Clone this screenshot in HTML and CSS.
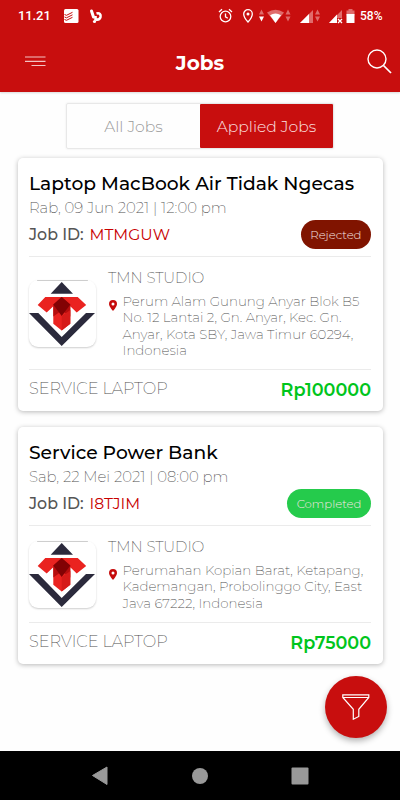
FILE: index.html
```html
<!DOCTYPE html>
<html lang="id">
<head>
    <meta charset="UTF-8">
    <meta name="viewport" content="width=device-width, initial-scale=1.0">
    <title>Jobs</title>
    <link rel="stylesheet" href="styles.css">
</head>
<body>

<!-- shared drawings, reused by both cards -->
<svg class="symbols" width="0" height="0">
    <symbol id="studio-logo" viewBox="0 0 67 67">
        <path d="M8 .3h51" stroke="#999" stroke-width=".6"/>
        <path d="M32.700 2L44 13.700H21.700z" fill="#2b2a3c"/>
        <path d="M0 33h9.300l23.400 24L57 33h9L32.700 66z" fill="#2b2a3c"/>
        <path d="M16.300 17h32.400l8.500 8-9.500 7.500-6.400-6.200v17.400l-8.600 6.800-8.400-6.800V26.300l-6.600 6.200-9-7.500z" fill="#ea2320"/>
        <path d="M24.300 24.500l8.400-7.500 8.600 7.500v12l-8.600-6-8.400 6z" fill="#b50d0d"/>
        <path d="M32.700 17l8.600 7.500-8.600 11.500-8.400-11.500z" fill="#820204"/>
        <path d="M32.700 36l8.600-6v13.700l-8.600 6.800z" fill="#d61b19"/>
    </symbol>
    <symbol id="pin" viewBox="0 0 8 11">
        <path fill-rule="evenodd" d="M4 0a4 4 0 0 0-4 4c0 2.600 4 7 4 7s4-4.400 4-7a4 4 0 0 0-4-4zm0 2.500a1.500 1.500 0 1 1 0 3 1.500 1.500 0 0 1 0-3z" fill="#c60b0b"/>
    </symbol>
</svg>

<header class="header">
    <div class="status-bar">
        <span class="clock">11.21</span>
        <svg class="notif" width="40" height="16" viewBox="0 0 40 16">
            <rect x="0" y="1" width="14.500" height="14" rx="1.500" fill="#fff"/>
            <path d="M.5 6.500l2 .8 6-3M.5 9l2 .8 6-3M.5 11.500l2 .8 6-3" fill="none" stroke="#c80e0e"/>
            <path d="M27.500 3l2 6" stroke="#fff" stroke-width="3" stroke-linecap="round"/>
            <path d="M32.500 5.500c3-1 4.500 1 4 3.500-.5 2.200-2.500 3-5 2.500V8" fill="none" stroke="#fff" stroke-width="2.600"/>
            <circle cx="30.500" cy="13.500" r="1.600" fill="#fff"/>
        </svg>
        <svg class="signals" width="138" height="16" viewBox="0 0 138 16">
            <g fill="none" stroke="#fff" stroke-width="1.300">
                <circle cx="7.500" cy="8.500" r="5.300"/>
                <path d="M7.500 5.500v3.300l2.300 1.400M1 4l3-2.700M14 4l-3-2.700"/>
                <path d="M30 1.700a4.300 4.300 0 0 0-4.300 4.300c0 3.300 4.300 8 4.300 8s4.300-4.700 4.300-8A4.300 4.300 0 0 0 30 1.700z"/>
            </g>
            <circle cx="30" cy="6" r="1.500" fill="#fff"/>
            <path d="M41 6.500l2.500-5 2.500 5zM67.500 6.500l2.500-5 2.500 5zM97 6.500l2.500-5 2.500 5zM67.500 8.500h5l-2.500 5zM97 8.500h5l-2.500 5z" fill="#e06b6b"/>
            <path d="M41 8.500h5l-2.500 5z" fill="#fff"/>
            <path d="M49 4.500q8.500-5.500 17 0L57.500 15z" fill="#e06b6b"/>
            <path d="M52 7.300q5.500-3.600 11 0L57.500 15z" fill="#fff"/>
            <path d="M82 15L95 2v13z" fill="#e06b6b"/>
            <path d="M82 15L91 6v9z" fill="#fff"/>
            <path d="M111 15l13-13v8h-5v5z" fill="#e06b6b"/>
            <path d="M111 15l8-8.500V15z" fill="#fff"/>
            <path d="M119.500 10.500h5v5h-5z" fill="#c80e0e"/>
            <path d="M120 11l4 4M124 11l-4 4" stroke="#fff" stroke-width="1.300"/>
            <path d="M128.500 2.500h2V1h4v1.500h2v5h-8z" fill="#e06b6b"/>
            <path d="M128.500 6h8v9h-8z" fill="#fff"/>
        </svg>
        <span class="battery">58%</span>
    </div>
    <div class="app-bar">
        <svg class="menu-icon" width="21" height="11" viewBox="0 0 21 11">
            <path d="M0 1h20.500M0 5.300h20.500M6.500 9.500h14" stroke="#f3c3c3" stroke-width="1.200"/>
        </svg>
        <h1 class="page-title">Jobs</h1>
        <svg class="search-icon" width="25" height="25" viewBox="0 0 25 25">
            <circle cx="10" cy="10" r="9" fill="none" stroke="#fff" stroke-width="1.400"/>
            <path d="M16.500 16.500L24 24" stroke="#fff" stroke-width="1.700"/>
        </svg>
    </div>
</header>

<main class="content">
    <div class="tabs">
        <div class="tab"><span>All Jobs</span></div>
        <div class="tab active"><span>Applied Jobs</span></div>
    </div>

    <article class="card">
        <h2 class="card-title">Laptop MacBook Air Tidak Ngecas</h2>
        <div class="card-date">Rab, 09 Jun 2021 | 12:00 pm</div>
        <div class="job-row">
            <span class="job-label">Job ID:</span>
            <span class="job-code">MTMGUW</span>
            <span class="badge rejected">Rejected</span>
        </div>
        <div class="card-body">
            <svg class="logo"><use href="#studio-logo"/></svg>
            <div class="studio">
                <div class="studio-name">TMN STUDIO</div>
                <div class="address">
                    <svg class="pin"><use href="#pin"/></svg>
                    <p>Perum Alam Gunung Anyar Blok B5<br>No. 12 Lantai 2, Gn. Anyar, Kec. Gn.<br>Anyar, Kota SBY, Jawa Timur 60294,<br>Indonesia</p>
                </div>
            </div>
        </div>
        <div class="card-footer">
            <span class="service">SERVICE LAPTOP</span>
            <span class="price">Rp100000</span>
        </div>
    </article>

    <article class="card">
        <h2 class="card-title">Service Power Bank</h2>
        <div class="card-date">Sab, 22 Mei 2021 | 08:00 pm</div>
        <div class="job-row">
            <span class="job-label">Job ID:</span>
            <span class="job-code">I8TJIM</span>
            <span class="badge completed">Completed</span>
        </div>
        <div class="card-body">
            <svg class="logo"><use href="#studio-logo"/></svg>
            <div class="studio">
                <div class="studio-name">TMN STUDIO</div>
                <div class="address">
                    <svg class="pin"><use href="#pin"/></svg>
                    <p>Perumahan Kopian Barat, Ketapang,<br>Kademangan, Probolinggo City, East<br>Java 67222, Indonesia</p>
                </div>
            </div>
        </div>
        <div class="card-footer">
            <span class="service">SERVICE LAPTOP</span>
            <span class="price">Rp75000</span>
        </div>
    </article>
</main>

<div class="filter-btn">
    <svg width="28" height="26" viewBox="0 0 28 26">
        <path d="M.8.800h26v2.700l-10 11.800v7.200l-5.500 2.700v-9.900L.8 3.500zM1 3.500h25.500" fill="none" stroke="#fff" stroke-width="1.200"/>
    </svg>
</div>

<nav class="nav-bar">
    <svg width="18" height="20" viewBox="0 0 18 20"><path d="M1.500 9.500L16 1v17.500z" fill="#999" stroke="#999" stroke-linejoin="round"/></svg>
    <svg width="18" height="18" viewBox="0 0 18 18"><circle cx="9" cy="9" r="8" fill="#999"/></svg>
    <svg width="18" height="18" viewBox="0 0 18 18"><rect x=".5" y=".5" width="17" height="17" rx="1" fill="#999"/></svg>
</nav>

</body>
</html>
```
FILE: styles.css
```css
* {
    box-sizing: border-box;
}

body {
    margin: 0;
    height: 800px;
    display: flex;
    flex-direction: column;
    overflow: hidden;
    position: relative;
    background: #fefefe;
    font-family: Montserrat, Inter, sans-serif;
    font-weight: 200;
    color: #505050;
    white-space: nowrap;
}

.symbols {
    position: absolute;
}

/* header */
.header {
    height: 92px;
    flex-shrink: 0;
    background: #c80e0e;
    color: #fff;
    box-shadow: 0 1px 2px rgba(0, 0, 0, 0.15);
}

.status-bar {
    height: 31px;
    display: flex;
    align-items: center;
    padding: 0 17px 0 18px;
    font-family: Roboto, sans-serif;
    font-weight: 500;
}

.clock {
    width: 46px;
    font-size: 13px;
    letter-spacing: -0.1px;
}

.signals {
    margin-left: auto;
    margin-right: 4px;
}

.battery {
    width: 23px;
    font-size: 12px;
}

.app-bar {
    height: 61px;
    display: grid;
    grid-template-columns: 1fr auto 1fr;
    align-items: center;
    padding: 0 8px 0 25px;
}

.page-title {
    margin: 2px 0 0 -17px;
    font-size: 20px;
    font-weight: 700;
}

.search-icon {
    justify-self: end;
}

/* tabs */
.tabs {
    display: flex;
    width: 268px;
    height: 46px;
    margin: 11px auto 9px;
    border: 1px solid #e8e8e8;
    border-radius: 2px;
    box-shadow: 0 0 2px rgba(0, 0, 0, 0.1);
}

.tab {
    flex: 1;
    display: flex;
    align-items: center;
    justify-content: center;
    font-size: 15.6px;
    font-weight: 300;
    color: #999;
}

.tab.active {
    background: #c80e0e;
    color: #fbe4e4;
    border-radius: 1px;
}

/* job cards */
.card {
    width: 365px;
    margin: 0 auto 16px;
    padding: 13px 11.5px 0;
    background: #fff;
    border-radius: 5px;
    box-shadow: 0 1px 5px rgba(0, 0, 0, 0.28);
}

.card-title {
    margin: 0;
    font-size: 18.7px;
    font-weight: 500;
    line-height: 25px;
    color: #000;
}

.card-date {
    font-size: 14.9px;
    line-height: 24px;
}

.job-row {
    display: flex;
    align-items: center;
    height: 29px;
}

.job-label {
    width: 60.5px;
    font-size: 15.8px;
    font-weight: 500;
    color: #555;
}

.job-code {
    font-size: 15.6px;
    font-weight: 400;
    color: #c80000;
}

.badge {
    margin-left: auto;
    height: 29px;
    padding: 0 9.5px;
    border-radius: 15px;
    font-size: 11.7px;
    font-weight: 300;
    line-height: 30px;
    color: #f6e6e3;
}

.rejected {
    background: #801400;
}

.completed {
    background: #25cb4c;
}

.card-body {
    display: flex;
    align-items: center;
    margin-top: 7px;
    padding: 11px 0 10px;
    border-top: 1px solid #ebebeb;
    border-bottom: 1px solid #ebebeb;
}

.logo {
    width: 67px;
    height: 67px;
    margin-right: 12px;
    border-radius: 9px;
    box-shadow: 0 1px 2px rgba(0, 0, 0, 0.2);
}

.studio-name {
    font-size: 14.9px;
    line-height: 20px;
    margin-bottom: 5px;
}

.address {
    display: flex;
    margin-bottom: 1px;
    font-size: 13.4px;
    line-height: 16.3px;
}

.address p {
    margin: 0;
}

.pin {
    width: 8px;
    height: 11px;
    margin: 7px 5.500px 0 1px;
}

.card-footer {
    display: flex;
    justify-content: space-between;
    height: 41px;
    line-height: 36px;
}

.service {
    font-size: 16.1px;
}

.price {
    font-size: 17.6px;
    font-weight: 600;
    line-height: 39px;
    color: #00c51c;
}

/* floating filter button, lies over the list */
.filter-btn {
    position: absolute;
    right: 13.5px;
    bottom: 62px;
    width: 62px;
    height: 62px;
    display: flex;
    align-items: center;
    justify-content: center;
    border-radius: 50%;
    background: #c80e0e;
    box-shadow: 0 3px 6px rgba(0, 0, 0, 0.3);
}

.nav-bar {
    height: 49px;
    margin-top: auto;
    display: flex;
    align-items: center;
    justify-content: center;
    gap: 82px;
    background: #000;
}
```
